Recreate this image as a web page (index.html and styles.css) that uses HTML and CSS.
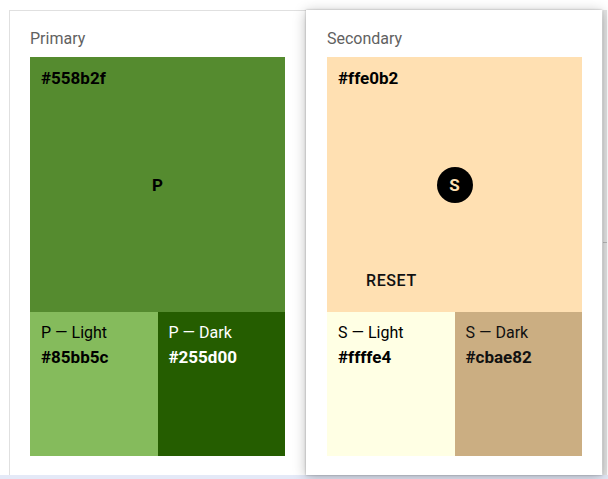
FILE: index.html
```html
<!DOCTYPE html>
<html>
<head>
<meta charset="utf-8">
<link rel="stylesheet" href="styles.css">
</head>
<body>
<div class="page">
  <div class="cards">
    <section class="card card-flat">
      <div class="card-title">Primary</div>
      <div class="palette">
        <div class="swatch-main primary">
          <span class="hex">#558b2f</span>
          <span class="center-letter">P</span>
        </div>
        <div class="swatch-row">
          <div class="swatch-sub primary-light">
            <span class="name">P — Light</span>
            <span class="hex">#85bb5c</span>
          </div>
          <div class="swatch-sub primary-dark">
            <span class="name">P — Dark</span>
            <span class="hex">#255d00</span>
          </div>
        </div>
      </div>
    </section>
    <section class="card card-raised">
      <div class="card-title">Secondary</div>
      <div class="palette">
        <div class="swatch-main secondary">
          <span class="hex">#ffe0b2</span>
          <span class="fab">S</span>
          <button class="reset">RESET</button>
        </div>
        <div class="swatch-row">
          <div class="swatch-sub secondary-light">
            <span class="name">S — Light</span>
            <span class="hex">#ffffe4</span>
          </div>
          <div class="swatch-sub secondary-dark">
            <span class="name">S — Dark</span>
            <span class="hex">#cbae82</span>
          </div>
        </div>
      </div>
    </section>
    <div class="edge"><div class="edge-line"></div></div>
  </div>
  <div class="strip"></div>
</div>
</body>
</html>
```

FILE: styles.css
```css
* { box-sizing: border-box; }
html, body {
  margin: 0;
  padding: 0;
  background: #ffffff;
  font-family: Roboto, "Liberation Sans", sans-serif;
  overflow: hidden;
}
.page {
  width: 608px;
  height: 479px;
  display: flex;
  flex-direction: column;
}
.cards {
  flex: 1;
  display: flex;
  padding: 10px 0 0 9px;
}
.card {
  display: flex;
  flex-direction: column;
  padding-top: 16px;
  background: #fff;
}
.card-flat {
  width: 297px;
  border-top: 1px solid #e0e0e0;
  border-left: 1px solid #e0e0e0;
  padding-left: 20px;
}
.card-raised {
  width: 296px;
  padding-left: 21px;
  padding-top: 17px;
  position: relative;
  z-index: 1;
  box-shadow: 0 2px 12px rgba(0, 0, 0, 0.28), 0 0 2px rgba(0, 0, 0, 0.3);
}
.edge {
  width: 4px;
  margin-left: 1px;
  background: #e4e4e4;
}
.edge-line {
  margin-top: 232px;
  height: 1px;
  background: #b8b8b8;
}
.card-title {
  font-size: 16px;
  line-height: 24px;
  color: #616161;
  margin-bottom: 6px;
}
.palette {
  width: 255px;
  display: flex;
  flex-direction: column;
}
.swatch-main {
  height: 255px;
  display: grid;
  padding: 11px;
}
.swatch-main > * {
  grid-area: 1 / 1;
}
.hex {
  font-size: 17px;
  line-height: 20px;
  font-weight: 700;
}
.swatch-main .hex {
  align-self: start;
  justify-self: start;
}
.center-letter {
  place-self: center;
  font-weight: 700;
  font-size: 17px;
}
.fab {
  place-self: center;
  width: 36px;
  height: 36px;
  margin-top: 1px;
  border-radius: 50%;
  background: #000;
  color: #ffe0b2;
  font-weight: 700;
  font-size: 17px;
  display: flex;
  align-items: center;
  justify-content: center;
}
.reset {
  align-self: end;
  justify-self: start;
  margin: 0 0 3px 19px;
  height: 36px;
  padding: 0 9px;
  border: 0;
  background: transparent;
  font-family: Roboto, "Liberation Sans", sans-serif;
  font-size: 16px;
  font-weight: 500;
  letter-spacing: 0.6px;
  color: #111;
}
.swatch-row {
  display: flex;
  height: 144px;
}
.swatch-sub {
  flex: 1 1 0;
  padding: 11px;
  display: flex;
  flex-direction: column;
  gap: 4px;
}
.name {
  font-size: 16px;
  line-height: 20px;
}
.primary { background: #558b2f; color: #000; }
.primary-light { background: #85bb5c; color: #000; }
.primary-dark { background: #255d00; color: #fff; }
.secondary { background: #ffe0b2; color: #000; }
.secondary-light { background: #ffffe4; color: #000; }
.secondary-dark { background: #cbae82; color: #111; }
.strip {
  height: 4px;
  background: #e4e9f7;
}
```
